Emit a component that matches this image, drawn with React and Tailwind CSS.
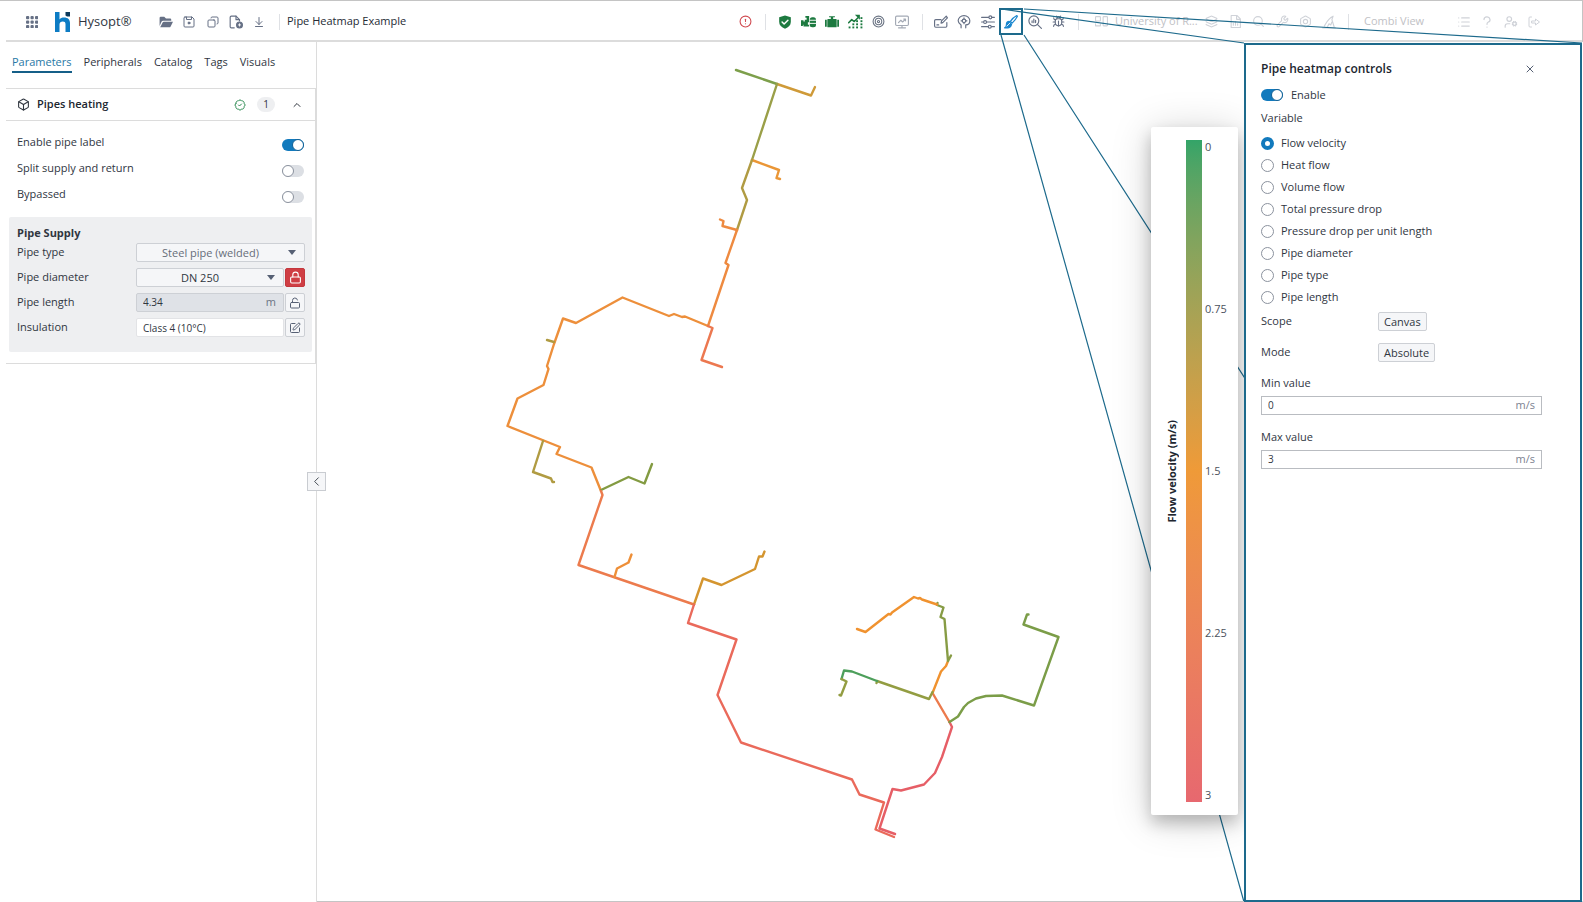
import { useState } from 'react'
import {
  ArrowDownToLine, BadgeCheck, Bolt, Box, Bug, ChevronLeft, ChevronUp, CircleAlert, Copy, Layers, List,
  Lock, LockOpen, Search, SquarePen, Target, UserCog, Wrench, X,
} from 'lucide-react'
import clsx from 'clsx'

function Glyph({ children, className = 'size-[14px]', filled = false }) {
  return (
    <svg viewBox="0 0 24 24" className={className} fill={filled ? 'currentColor' : 'none'} stroke={filled ? 'none' : 'currentColor'}
      strokeWidth="2" strokeLinecap="round" strokeLinejoin="round" aria-hidden="true">
      {children}
    </svg>
  )
}

const GridIcon = () => (
  <Glyph filled className="size-[12px]">
    {[3, 12, 21].map(y => [3, 12, 21].map(x => <rect key={`${x}-${y}`} x={x - 3} y={y - 3} width="6.500" height="6.500" rx="2"/>))}
  </Glyph>
)
const FolderIcon = () => (
  <Glyph filled>
    <path d="M1 19V5a2 2 0 0 1 2-2h6l3 3h7a2 2 0 0 1 2 2v2H7a3 3 0 0 0-2.700 1.700z"/>
    <path d="M2 21l4.500-8.500A2 2 0 0 1 8.200 11.500H24l-4.300 8.500a2 2 0 0 1-1.700 1z"/>
  </Glyph>
)
const SaveIcon = () => (
  <Glyph className="size-3">
    <path d="M4 2h14l4 4v14a2 2 0 0 1-2 2H4a2 2 0 0 1-2-2V4a2 2 0 0 1 2-2z"/><path d="M7 2v5h10V2"/><circle cx="12" cy="14" r="2" fill="currentColor"/>
  </Glyph>
)
const FileAddIcon = () => (
  <Glyph>
    <path d="M9 22H4a2 2 0 0 1-2-2V4a2 2 0 0 1 2-2h8l6 6v2"/><path d="M12 2v6h6"/>
    <circle cx="18" cy="17" r="5" fill="currentColor"/><path d="M18 15v4M16 17h4" stroke="white" strokeWidth="1.500"/>
  </Glyph>
)
const ShieldIcon = () => (
  <Glyph filled>
    <path d="M12 1l10 3v8c0 5.500-4 9-10 11.500C6 21 2 17.500 2 12V4z"/>
    <path d="M7 12l3.500 3.500L17 9" fill="none" stroke="white" strokeWidth="2.500"/>
  </Glyph>
)
const BoilerIcon = () => (
  <Glyph filled className="size-[15px]">
    <path d="M0 10h4v2h2V9h3V6H7V3h6v10h-2v4h2v3H4v-3H3v2H0z"/>
    <rect x="14" y="5" width="10" height="16" rx="4"/>
    <path d="M14 10h10M14 15h10" stroke="white" strokeWidth="1.500"/>
  </Glyph>
)
const TankIcon = () => (
  <Glyph filled>
    <rect x="4" y="7" width="16" height="14" rx="1"/><path d="M0 8h3v12H0zM21 8h3v12h-3zM7 2h10v2h-3v3h-4V4H7z"/>
  </Glyph>
)
const TrendGridIcon = () => (
  <Glyph filled className="size-[15px]">
    <path d="M1 14l5-5 4 3 6-6" fill="none" stroke="currentColor" strokeWidth="2.500"/><path d="M11 1h8v8z"/>
    {[[2, 21], [8, 16], [8, 21], [14, 11], [14, 16], [14, 21], [21, 11], [21, 16], [21, 21], [21, 6]].map(([x, y]) => (
      <rect key={`${x}-${y}`} x={x - 1} y={y - 1} width="3" height="3"/>
    ))}
  </Glyph>
)
const MonitorIcon = () => (
  <Glyph><rect x="1" y="2" width="22" height="16" rx="2"/><path d="M6 13l4-4 3 3 5-5M15 7h3v3M12 18v4M6 22h12"/></Glyph>
)
const EditLineIcon = () => (
  <Glyph><path d="M12 8H3a2 2 0 0 0-2 2v9a2 2 0 0 0 2 2h17a2 2 0 0 0 2-2v-6M5 17h3M12 14l1-4 8-8 2 3-8 8z"/></Glyph>
)
const HeadGearIcon = () => (
  <Glyph>
    <path d="M7 22v-5c-3-2-5-4-5-7a10 9 0 0 1 20 0c0 5-3 7-7 7v5"/>
    <circle cx="12" cy="10" r="3"/><path d="M12 5v2M12 13v2M7 10h2M15 10h2"/>
  </Glyph>
)
const SlidersIcon = () => (
  <Glyph>
    <path d="M1 4h12M19 4h4M1 12h3M10 12h13M1 20h11M18 20h5"/>
    <circle cx="16" cy="4" r="2.500"/><circle cx="7" cy="12" r="2.500"/><circle cx="15" cy="20" r="2.500"/>
  </Glyph>
)
const BrushIcon = () => (
  <Glyph>
    <path d="M22 1c-4 2-8 5-11 10l3 3c4-4 7-8 9-12z"/>
    <path d="M9 11c-4 0-5 3-5 6 0 2-1 4-3 5 5 1 11 0 12-6z" fill="currentColor"/><path d="M5 19l5-5" stroke="white" strokeWidth="1.500"/>
  </Glyph>
)
const SearchChartIcon = () => (
  <Glyph><circle cx="10" cy="10" r="8.500"/><path d="M16 16l7 7M7 13v-3M10 13V7M13 13v-4"/></Glyph>
)
const BoardIcon = () => (
  <Glyph className="size-[13px]"><rect x="1" y="3" width="9" height="8" rx="1"/><path d="M1 16v4h9v-4"/><rect x="15" y="3" width="8" height="17" rx="1"/></Glyph>
)
const ReportIcon = () => (
  <Glyph className="size-[13px]"><path d="M4 1h11l6 6v16H4zM14 1v7h7"/><path d="M8 19v-4M12 19v-7M16 19v-3"/></Glyph>
)
const HatIcon = () => (
  <Glyph><path d="M1 22h22M4 19c3-5 6-13 15-17l-2 6 4 13M9 21l3-6 3 2 2-5"/></Glyph>
)
const QuestionIcon = () => (
  <Glyph className="size-3"><path d="M6 7a6 5.500 0 1 1 8 5.500c-2 .8-2 1.500-2 4M12 22v.1" strokeWidth="2.500"/></Glyph>
)
const ExitIcon = () => (
  <Glyph className="size-3"><path d="M7 2H4a2 2 0 0 0-2 2v16a2 2 0 0 0 2 2h3M8 10h7V6l8 6-8 6v-4H8z"/></Glyph>
)

function IconButton({ label, children, active }) {
  return (
    <button aria-label={label} className={clsx('flex h-[27px] items-center justify-center',
      active ? 'w-6 shrink-0 text-[#1b87cf] inset-ring-2 inset-ring-[#1d6a8c]' : 'min-w-0 flex-1')}>
      <span className="shrink-0">{children}</span>
    </button>
  )
}

const Divider = () => <span className="h-4 w-px shrink-0 bg-[#dfe1e5]"/>

function Header() {
  return (
    <header className="flex h-[42px] shrink-0 items-center justify-between border-t border-r border-[#c4c4c4] pl-1.5">
      <div className="flex h-full flex-1 items-center justify-between border-b-2 border-[#dcdcdc] pt-[2px] pr-[36px] pl-[20px] text-[#667085]">
        <div className="flex items-center">
          <button aria-label="Apps"><GridIcon/></button>
          <svg viewBox="0 0 17 20" className="ml-[16px] h-5 w-[17px]" aria-hidden="true">
            <path d="M1 0h4.500v7.500C6.500 6 8 5.500 10 5.500c4 0 6 2 6 6V20h-4.500v-8c0-1.700-1-2.500-2.700-2.500-2 0-3.300 1-3.300 3V20H1z" fill="#0d7cc4"/>
            <path d="M11.500 0H16v4.500h-3l-1.500-1z" fill="#0c3a5c"/>
          </svg>
          <span className="ml-[7px] w-[51px] text-[13px] whitespace-nowrap text-[#30363f]">Hysopt®</span>
          <div className="ml-[25px] flex w-[117px]">
            <IconButton label="Open"><FolderIcon/></IconButton>
            <IconButton label="Save"><SaveIcon/></IconButton>
            <IconButton label="Copy"><Copy size={12} className="-scale-x-100"/></IconButton>
            <IconButton label="New file"><FileAddIcon/></IconButton>
            <IconButton label="Download"><ArrowDownToLine size={12}/></IconButton>
          </div>
          <span className="ml-2"/><Divider/>
          <h1 className="ml-[7px] text-[#252b34]">Pipe Heatmap Example</h1>
        </div>
        <div className="flex items-center">
          <button aria-label="Errors" className="mr-[13px] text-[#d04a50]"><CircleAlert size={13}/></button>
          <Divider/>
          <div className="mr-2 ml-[7px] flex w-[141px] text-[#1d7a40]">
            <IconButton label="Validation"><ShieldIcon/></IconButton>
            <IconButton label="Production"><BoilerIcon/></IconButton>
            <IconButton label="Storage"><TankIcon/></IconButton>
            <IconButton label="Simulation"><TrendGridIcon/></IconButton>
            <IconButton label="Targets"><Target size={13} className="text-[#6b7484]"/></IconButton>
            <IconButton label="Monitor"><span className="text-[#a4aab5]"><MonitorIcon/></span></IconButton>
          </div>
          <Divider/>
          <div className="mr-2 ml-[6px] flex w-[141px]">
            <IconButton label="Edit"><EditLineIcon/></IconButton>
            <IconButton label="Assistant"><HeadGearIcon/></IconButton>
            <IconButton label="Filters"><SlidersIcon/></IconButton>
            <IconButton label="Pipe heatmap" active><BrushIcon/></IconButton>
            <IconButton label="Inspect"><SearchChartIcon/></IconButton>
            <IconButton label="Debug"><Bug size={13}/></IconButton>
          </div>
          <Divider/>
          <div className="ml-[16px] flex items-center text-[#cfd2d8]">
            <BoardIcon/>
            <span className="ml-[7px] w-[78px] whitespace-nowrap text-[#bfc1c5]">University of R...</span>
            <div className="mr-[7px] ml-[7px] flex w-[141px]">
              <IconButton label="Layers"><Layers size={13}/></IconButton>
              <IconButton label="Report"><ReportIcon/></IconButton>
              <IconButton label="Search"><Search size={13}/></IconButton>
              <IconButton label="Tools"><Wrench size={13}/></IconButton>
              <IconButton label="Settings"><Bolt size={13}/></IconButton>
              <IconButton label="Wizard"><HatIcon/></IconButton>
            </div>
            <Divider/>
            <span className="ml-[15px] w-[58px] whitespace-nowrap text-[#bfc1c5]">Combi View</span>
            <div className="ml-[30px] flex w-[94px]">
              <IconButton label="List"><List size={14}/></IconButton>
              <IconButton label="Help"><QuestionIcon/></IconButton>
              <IconButton label="Account"><UserCog size={14}/></IconButton>
              <IconButton label="Log out"><ExitIcon/></IconButton>
            </div>
          </div>
        </div>
      </div>
    </header>
  )
}

function Toggle({ id, defaultChecked }) {
  return (
    <span className="relative inline-flex h-3 w-[22px] shrink-0">
      <input id={id} type="checkbox" role="switch" defaultChecked={defaultChecked}
        className="peer h-3 w-[22px] appearance-none rounded-full bg-[#dcdfe4] checked:bg-[#127abd]"/>
      <span className="pointer-events-none absolute top-0 left-0 size-3 rounded-full border border-[#8b929e] bg-white peer-checked:left-[10px] peer-checked:border-[#0f5f95]"/>
    </span>
  )
}

const tabs = ['Parameters', 'Peripherals', 'Catalog', 'Tags', 'Visuals']

const switches = [
  { id: 'label', text: 'Enable pipe label', on: true },
  { id: 'split', text: 'Split supply and return' },
  { id: 'bypass', text: 'Bypassed' },
]

function SelectBox({ id, value, className }) {
  return (
    <div className="relative min-w-0 flex-1">
      <select id={id} className={clsx('block h-[19px] w-full appearance-none rounded-xs border border-[#cdd0d5] bg-[#f5f6f8] pr-5 text-[11px] leading-[17px] [text-align-last:center]', className)}>
        <option>{value}</option>
      </select>
      <span className="pointer-events-none absolute top-[7px] right-[9px] border-x-4 border-t-[5px] border-x-transparent border-t-[#566074]"/>
    </div>
  )
}

function SideButton({ label, className, children }) {
  return (
    <button aria-label={label} className={clsx('flex h-[19px] w-5 shrink-0 items-center justify-center rounded-xs border', className)}>
      {children}
    </button>
  )
}

function Field({ id, label, children }) {
  return (
    <div className="flex h-[25px] items-center">
      <label htmlFor={id} className="w-[119px] shrink-0">{label}</label>
      <div className="flex min-w-0 flex-1 gap-px">{children}</div>
    </div>
  )
}

function Sidebar() {
  const [tab, setTab] = useState('Parameters')
  return (
    <aside className="relative w-[317px] shrink-0 border-r border-[#dcdcdc] pl-1.5">
      <div role="tablist" className="flex h-[46px] items-start gap-3 pt-[10px] pl-1.5">
        {tabs.map(t => (
          <button key={t} role="tab" aria-selected={t === tab} onClick={() => setTab(t)}
            className={clsx('h-[21px] border-b-2 leading-[19px]', t === tab ? 'border-[#155f88] text-[#2878a6]' : 'border-transparent')}>
            {t}
          </button>
        ))}
      </div>
      <section className="border-y border-r border-[#dcdcdc] pb-[11px]">
        <div className="flex h-[32px] items-center border-b border-[#dcdcdc] pr-[12px] pl-[11px]">
          <Box size={13}/>
          <h2 className="ml-[7px] flex-1 font-semibold text-[#20262f]">Pipes heating</h2>
          <BadgeCheck size={12} className="text-[#2a8a50]"/>
          <span className="mr-[16px] ml-[11px] flex h-[15px] w-[18px] items-center justify-center rounded-full bg-[#eeeff1] text-[10px]">1</span>
          <button aria-label="Collapse section"><ChevronUp size={12}/></button>
        </div>
        <div className="pt-2 pr-[11px] pb-[10px] pl-[11px]">
          {switches.map(s => (
            <div key={s.id} className="flex h-[26px] items-center justify-between">
              <label htmlFor={s.id}>{s.text}</label>
              <span className="flex pt-[6px]"><Toggle id={s.id} defaultChecked={s.on}/></span>
            </div>
          ))}
        </div>
        <div className="mr-[3px] ml-[3px] rounded-xs bg-[#eeeff1] pt-[9px] pr-[7px] pb-[12px] pl-[8px]">
          <h3 className="leading-[14px] font-bold text-[#30363f]">Pipe Supply</h3>
          <Field id="type" label="Pipe type">
            <SelectBox id="type" value="Steel pipe (welded)" className="text-[#666d79]"/>
          </Field>
          <Field id="diameter" label="Pipe diameter">
            <SelectBox id="diameter" value="DN 250"/>
            <SideButton label="Unlock diameter" className="border-[#c4373d] bg-[#cf3e44] text-white"><Lock size={13}/></SideButton>
          </Field>
          <Field id="length" label="Pipe length">
            <div className="flex h-[19px] min-w-0 flex-1 items-center rounded-xs border border-[#cdd0d5] bg-[#dfe2e7] px-[6px]">
              <input id="length" readOnly defaultValue="4.34" className="min-w-0 flex-1 text-[10px] leading-[17px] outline-none"/>
              <span className="pr-px text-[#6b7484]">m</span>
            </div>
            <SideButton label="Lock length" className="border-[#cdd0d5] bg-[#f5f6f8] text-[#566074]"><LockOpen size={12}/></SideButton>
          </Field>
          <Field id="insulation" label="Insulation">
            <input id="insulation" defaultValue="Class 4 (10°C)" className="h-[19px] min-w-0 flex-1 rounded-xs border border-[#e2e3e6] bg-white px-[6px] text-[10px] outline-none"/>
            <SideButton label="Edit insulation" className="border-[#cdd0d5] bg-[#f5f6f8] text-[#566074]"><SquarePen size={12}/></SideButton>
          </Field>
        </div>
      </section>
      <button aria-label="Collapse sidebar" className="absolute top-1/2 -right-[10px] z-10 flex size-[19px] items-center justify-center border border-[#c9ccd1] bg-[#f5f6f8] text-[#3d434c]">
        <ChevronLeft size={15} strokeWidth={1.5}/>
      </button>
    </aside>
  )
}

const pipes = [
  ['#7d9f4b', '736,70 777,84'],
  ['#cf9a38', '777,84 811,95.500 815,87'],
  ['#9a9f48', '777,84 752,160'],
  ['#ea9636', '752,160 779,170 776.500,178 780,179'],
  ['#b09b42', '752,160 742,188 747,200 737,230'],
  ['#ee8a40', '720,219.500 723.500,221 722.500,226 737,230'],
  ['#ee8a40', '737,230 725.500,263 728.500,265 708,326'],
  ['#ed8f3b', '708,326 685,316.500 682,317 674,314 669,316 622.500,297.500 576,323 563,318.500 554,344 547,366 548.500,369 543.500,385 517.500,398.500 507.500,426 560,447 556.500,454 591.500,467.500 601,491'],
  ['#b09b42', '547,340 554,342'],
  ['#ec7850', '708,326 712.500,328 701.500,360 722,367'],
  ['#b09b42', '543,441 533,472 551,478.500 552.500,482 554,482'],
  ['#839b42', '601,490 628.500,477 644.500,483.500 652,464'],
  ['#ec7b4d', '601,491 602.500,495 578.500,565 694,604.500'],
  ['#ee8f38', '614.500,577 617,568.500 628.500,562.500 631.500,554.500'],
  ['#d4952f', '694,604.500 703,578.500 721.500,585 755,569 759,556.500 762.500,556.500 764.500,551.500'],
  ['#ea6a5b', '694,604.500 688,623 736.500,639.500 717.500,695 741,742.500 852,779.500 859.500,794.500 884,802.500 875.500,829.500 894,837'],
  ['#e65e66', '895,834 879.500,828.500 892.500,789 901,790.500 924,784.500 935,773 942,757 952,727 949.500,722'],
  ['#ec7a4c', '949.500,722 932.500,693'],
  ['#7b9d48', '949.500,722 958,716.500 964,707 968,703 976,698.500 986,696 1002,695.500 1034,705.500 1058.500,637 1023.500,624.500 1027,614.500 1028.500,614.500'],
  ['#f0922f', '932.500,693 941,671.500 946,666 948,661'],
  ['#879c45', '951,655.500 948,661 944.500,619 940.500,617 943.500,607.500 937,605 937.500,603'],
  ['#f0922f', '937,604.500 922,599.500 920,598 918,598.500 914,597 892,612.500 890.500,614.500 888.500,614 865.500,632 857,629'],
  ['#939d42', '932.500,692 929,699 877,681 876.500,683'],
  ['#4d9f5b', '877,681 852,671.500 844,670.500 841.500,679'],
  ['#939d42', '841.500,679 846.500,681.500 841,695.500 839.500,695'],
]

function NetworkCanvas() {
  return (
    <svg viewBox="317 42 927 859" className="absolute inset-0 h-full w-full" role="img" aria-label="Pipe network">
      {pipes.map(([color, points]) => (
        <polyline key={points} points={points} fill="none" stroke={color} strokeWidth="2.400" strokeLinejoin="round" strokeLinecap="round"/>
      ))}
    </svg>
  )
}

function Legend() {
  return (
    <div className="absolute top-[85px] right-[6px] bottom-[86px] z-10 flex w-[87px] rounded-xs bg-white py-[13px] pl-3 shadow-[0_8px_16px_rgba(0,0,0,0.22),0_4px_40px_rgba(0,0,0,0.18)]">
      <div className="flex w-[23px] items-center">
        <span className="rotate-180 leading-[18px] font-bold whitespace-nowrap text-[#20262f] [writing-mode:vertical-rl]">Flow velocity (m/s)</span>
      </div>
      <div className="w-4 bg-linear-to-b from-[#33a468] via-[#ef9a38] to-[#e7686f]"/>
      <ul className="ml-[3px] flex flex-col justify-between text-[#4b515c]">
        {['0', '0.75', '1.5', '2.25', '3'].map(v => <li key={v} className="leading-[14px]">{v}</li>)}
      </ul>
    </div>
  )
}

// guide lines from the toolbar button to the enlarged panel
function Callout() {
  return (
    <svg viewBox="0 0 1583 902" preserveAspectRatio="none" className="pointer-events-none absolute inset-0 h-full w-full" aria-hidden="true">
      <path d="M1001 9L1244 43M1024 9L1582 43M1001 35L1244 902M1024 35L1582 902" fill="none" stroke="#1d6a8c" strokeWidth="1.200"/>
    </svg>
  )
}

const variables = [
  'Flow velocity', 'Heat flow', 'Volume flow', 'Total pressure drop',
  'Pressure drop per unit length', 'Pipe diameter', 'Pipe type', 'Pipe length',
]

function ValueField({ id, label, value }) {
  return (
    <div className="mb-[12px]">
      <label htmlFor={id} className="block leading-[20px]">{label}</label>
      <div className="mt-[3px] flex h-[19px] items-center border border-[#b9bcc1] px-[6px]">
        <input id={id} defaultValue={value} className="min-w-0 flex-1 text-[10px] leading-[17px] outline-none"/>
        <span className="text-[#7b8290]">m/s</span>
      </div>
    </div>
  )
}

function HeatmapPanel() {
  const [variable, setVariable] = useState('Flow velocity')
  return (
    <aside className="relative z-20 mt-px mr-px w-[338px] shrink-0 border-2 border-[#1d6a8c] bg-white pt-[14px] pr-[38px] pl-[15px]">
      <div className="flex h-[20px] items-center justify-between pr-[6px]">
        <h2 className="text-[12px] font-semibold text-[#20262f]">Pipe heatmap controls</h2>
        <button aria-label="Close" className="text-[#566074]"><X size={12}/></button>
      </div>
      <div className="mt-[6px] flex h-[20px] items-center gap-2">
        <Toggle id="enable" defaultChecked/>
        <label htmlFor="enable">Enable</label>
      </div>
      <fieldset>
        <legend className="pt-[3px] pb-[4px] leading-[20px]">Variable</legend>
        {variables.map(v => (
          <label key={v} className="flex h-[22px] items-center gap-[7px]">
            <input type="radio" name="variable" checked={variable === v} onChange={() => setVariable(v)}
              className="size-[13px] appearance-none rounded-full border border-[#8b929e] bg-white checked:border-4 checked:border-[#127abd]"/>
            {v}
          </label>
        ))}
      </fieldset>
      <div className="mt-px flex h-[25px] items-center">
        <span className="w-[117px]">Scope</span>
        <button className="h-[19px] rounded-xs border border-[#cdd0d5] bg-[#f5f6f8] px-[5px] leading-[17px]">Canvas</button>
      </div>
      <div className="mt-[6px] mb-[8px] flex h-[25px] items-center">
        <span className="w-[117px]">Mode</span>
        <button className="h-[19px] rounded-xs border border-[#cdd0d5] bg-[#f5f6f8] px-[5px] leading-[17px]">Absolute</button>
      </div>
      <ValueField id="min" label="Min value" value="0"/>
      <ValueField id="max" label="Max value" value="3"/>
    </aside>
  )
}

export default function App() {
  return (
    <div className="relative flex min-h-screen flex-col bg-white font-['Open_Sans',sans-serif] text-[11px] text-[#30363f]">
      <Header/>
      <Callout/>
      <main className="flex flex-1">
        <Sidebar/>
        <div className="relative min-w-0 flex-1 border-b border-[#c4c4c4]">
          <NetworkCanvas/>
          <Legend/>
        </div>
        <HeatmapPanel/>
      </main>
    </div>
  )
}
